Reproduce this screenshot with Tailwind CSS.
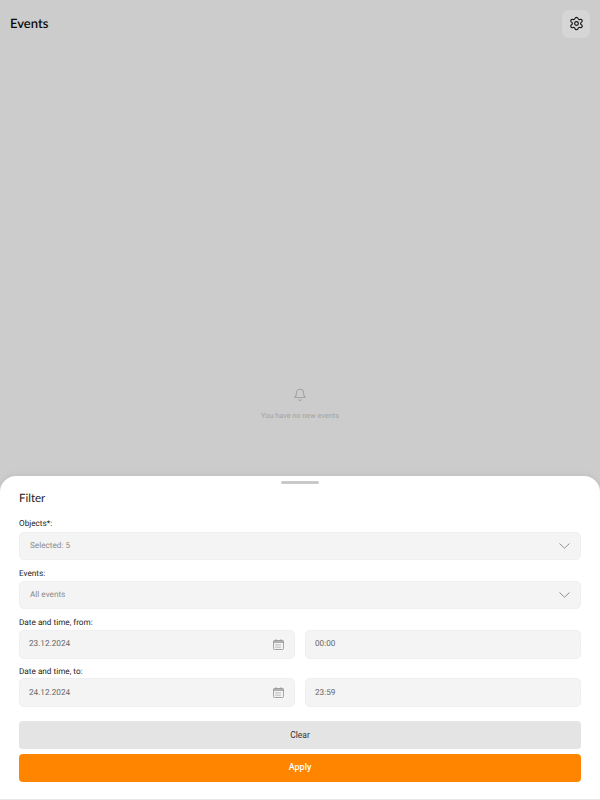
<!DOCTYPE html>
<html lang="en">
<head>
  <meta charset="UTF-8" />
  <meta name="viewport" content="width=device-width, initial-scale=1.0" />
  <title>Events</title>
  <script src="https://cdn.jsdelivr.net/npm/@tailwindcss/browser@4"></script>
</head>
<body class="bg-[#cccccc] font-['Roboto',sans-serif] [text-rendering:geometricPrecision]">
  <div class="w-[600px] h-[800px] flex flex-col overflow-hidden">
    <!-- Header -->
    <div class="h-[46px] shrink-0 flex items-center justify-between pl-[10px] pr-[10px]">
      <h1 class="font-['Lato',sans-serif] font-semibold text-[13px] text-[#0a0a0a] mt-[1px]">Events</h1>
      <button class="w-[28px] h-[28px] mt-[1px] rounded-[7px] bg-[#d6d6d6] flex items-center justify-center">
        <svg width="15" height="15" viewBox="0 0 24 24" fill="none" stroke="#111" stroke-width="1.8" stroke-linecap="round" stroke-linejoin="round">
          <path d="M9.6 3.9a2.5 2.5 0 0 1 4.8 0 2.5 2.5 0 0 0 3.6 1.5 2.5 2.5 0 0 1 2.4 4.2 2.5 2.5 0 0 0 0 4.8 2.5 2.5 0 0 1-2.4 4.2 2.5 2.5 0 0 0-3.6 1.5 2.5 2.5 0 0 1-4.8 0A2.5 2.5 0 0 0 6 18.6a2.5 2.5 0 0 1-2.4-4.2 2.5 2.5 0 0 0 0-4.8A2.5 2.5 0 0 1 6 5.4a2.5 2.5 0 0 0 3.6-1.5z" />
          <circle cx="12" cy="12" r="3" />
        </svg>
      </button>
    </div>

    <!-- Empty state -->
    <div class="h-[430px] shrink-0 flex flex-col items-center justify-end pb-[54px]">
      <svg width="14" height="15" viewBox="0 0 24 24" fill="none" stroke="#a3a3a3" stroke-width="1.8" stroke-linecap="round" stroke-linejoin="round">
        <path d="M6 9a6 6 0 0 1 12 0c0 6 3 8 3 8H3s3-2 3-8" />
        <path d="M10 21a2.2 2.2 0 0 0 4 0" />
      </svg>
      <p class="mt-[8px] text-[7.3px] leading-[12px] text-[#a3a3a3]">You have no new events</p>
    </div>

    <!-- Filter sheet -->
    <div class="flex-1 bg-white rounded-t-[16px] px-[19px] flex flex-col border-b border-[#e6e6e6] shadow-[0_-2px_6px_rgba(0,0,0,0.05)]">
      <div class="w-[38px] h-[3px] rounded-full bg-[#c9c9c9] mx-auto mt-[5px]"></div>
      <h2 class="font-['Lato',sans-serif] text-[11.5px] leading-[14px] text-[#222] mt-[8px]">Filter</h2>

      <label class="text-[8.2px] leading-[10px] text-[#222] mt-[13px]">Objects*:</label>
      <div class="h-[28px] mt-[3px] rounded-[5px] bg-[#f4f4f4] border border-[#efefef] flex items-center justify-between pl-[10px] pr-[10px]">
        <span class="pt-[1px] text-[8.2px] text-[#8a8a8a]">Selected: 5</span>
        <svg width="11" height="6" viewBox="0 0 11 6" fill="none" stroke="#777" stroke-width="0.8"><path d="M0.5 0.5 5.5 5.2 10.5 0.5" /></svg>
      </div>

      <label class="text-[8.2px] leading-[10px] text-[#222] mt-[9px]">Events:</label>
      <div class="h-[28px] mt-[2px] rounded-[5px] bg-[#f4f4f4] border border-[#efefef] flex items-center justify-between pl-[10px] pr-[10px]">
        <span class="pt-[1px] text-[8.2px] text-[#8a8a8a]">All events</span>
        <svg width="11" height="6" viewBox="0 0 11 6" fill="none" stroke="#777" stroke-width="0.8"><path d="M0.5 0.5 5.5 5.2 10.5 0.5" /></svg>
      </div>

      <label class="text-[8.2px] leading-[10px] text-[#222] mt-[9px]">Date and time, from:</label>
      <div class="grid grid-cols-2 gap-[10px] mt-[2px]">
        <div class="h-[29px] rounded-[5px] bg-[#f4f4f4] border border-[#efefef] flex items-center justify-between pl-[9px] pr-[10px]">
          <span class="text-[8.2px] text-[#666]">23.12.2024</span>
          <svg width="11" height="11" viewBox="0 0 11 11" fill="none" stroke="#8f8f8f" stroke-width="0.8"><rect x="0.5" y="1.5" width="10" height="9" rx="1" /><path d="M0.5 2.2h10M0.5 3.4h10M3 0.2v2M8 0.2v2" /><path d="M2.5 5.5h6M2.5 7h6M2.5 8.6h6" stroke-dasharray="1 1" /></svg>
        </div>
        <div class="h-[29px] rounded-[5px] bg-[#f4f4f4] border border-[#efefef] flex items-center pl-[9px]">
          <span class="text-[8.2px] text-[#666]">00:00</span>
        </div>
      </div>

      <label class="text-[8.2px] leading-[10px] text-[#222] mt-[8px]">Date and time, to:</label>
      <div class="grid grid-cols-2 gap-[10px] mt-[1px]">
        <div class="h-[29px] rounded-[5px] bg-[#f4f4f4] border border-[#efefef] flex items-center justify-between pl-[9px] pr-[10px]">
          <span class="pt-[1px] text-[8.2px] text-[#666]">24.12.2024</span>
          <svg width="11" height="11" viewBox="0 0 11 11" fill="none" stroke="#8f8f8f" stroke-width="0.8"><rect x="0.5" y="1.5" width="10" height="9" rx="1" /><path d="M0.5 2.2h10M0.5 3.4h10M3 0.2v2M8 0.2v2" /><path d="M2.5 5.5h6M2.5 7h6M2.5 8.6h6" stroke-dasharray="1 1" /></svg>
        </div>
        <div class="h-[29px] rounded-[5px] bg-[#f4f4f4] border border-[#efefef] flex items-center pl-[9px]">
          <span class="pt-[1px] text-[8.2px] text-[#666]">23:59</span>
        </div>
      </div>

      <button class="h-[28px] mt-[14px] rounded-[4px] bg-[#e4e4e4] text-[8.5px] text-[#333]">Clear</button>
      <button class="h-[28px] mt-[5px] rounded-[4px] bg-[#ff8500] text-[9px] font-medium text-white">Apply</button>
    </div>
  </div>
</body>
</html>
